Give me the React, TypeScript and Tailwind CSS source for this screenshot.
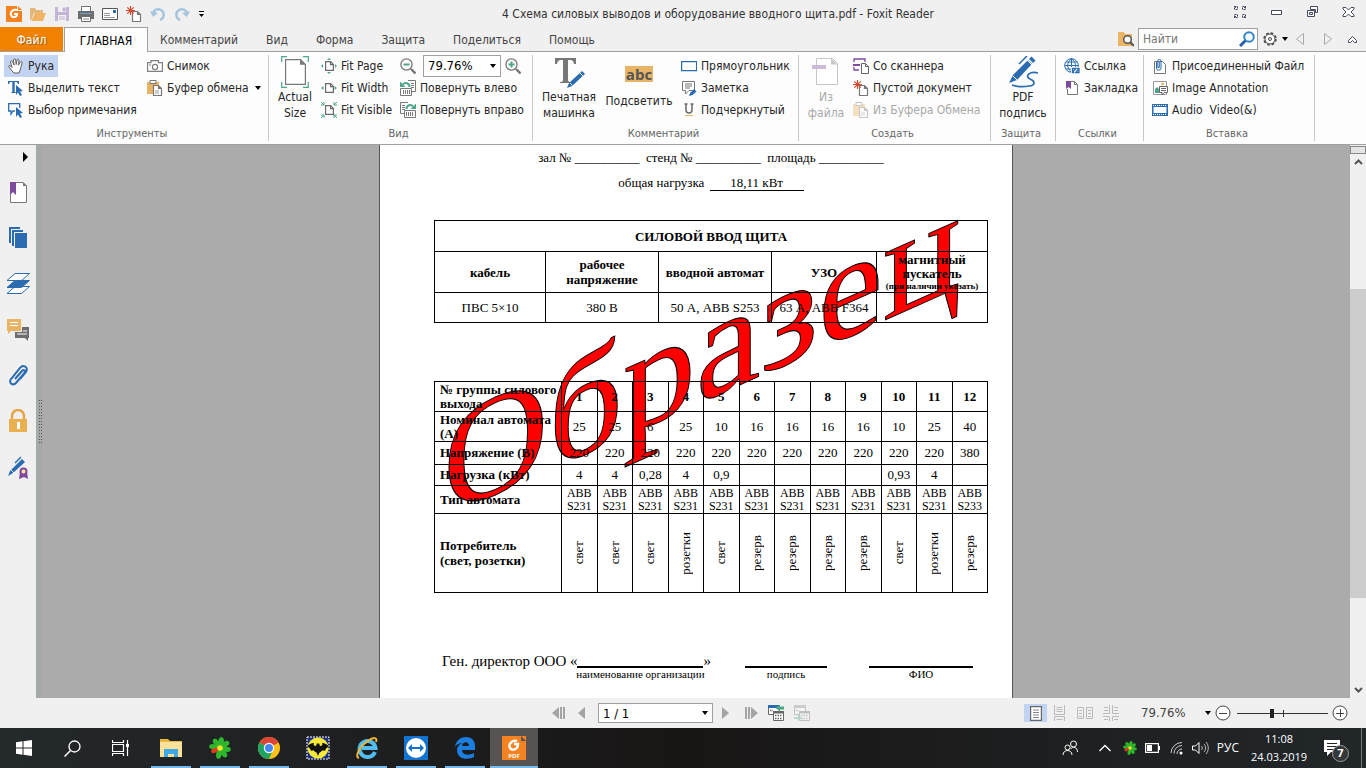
import type { ReactNode } from "react";

/* ---------- icon helpers ---------- */

function Ico({ w = 16, h = 16, children }: { w?: number; h?: number; children: ReactNode }) {
  return (
    <svg width={w} height={h} viewBox={`0 0 ${w} ${h}`} fill="none" className="shrink-0" aria-hidden="true">
      {children}
    </svg>
  );
}

const Caret = () => (
  <Ico w={6} h={4}>
    <path d="M0 0h6L3 4z" fill="#000" />
  </Ico>
);

const PageShape = ({ color = "#777" }: { color?: string }) => (
  <path d="M6.5 5.5h5l3 3v7h-8zM11.5 5.5v3h3" fill="#fff" stroke={color} strokeWidth="1.2" />
);

const FoxitIcon = () => (
  <Ico>
    <path d="M0 0h11v5h5v11H0z" fill="#f58220" />
    <path d="M12 0l4 4h-4z" fill="#f58220" />
    <path d="M11 4C7 3 4 6 5 9c1 3 6 3 6-1H8" stroke="#fff" strokeWidth="2" />
  </Ico>
);

const OpenIcon = () => (
  <Ico>
    <path d="M0 2h5l1 2h7v3H4l-3 7H0z" fill="#e3b679" />
    <path d="M5 7h11l-3 8H1z" fill="#efb562" />
  </Ico>
);

const SaveIcon = () => (
  <Ico>
    <path d="M1 1h14v14H1z" fill="#c4b4d6" />
    <path d="M4 1h8v5H4zM4 9h8v6H4z" fill="#f0f0f0" />
    <path d="M9 2h2v3H9zM5 11h6M5 13h6" fill="#c4b4d6" stroke="#c4b4d6" />
  </Ico>
);

const PrintIcon = () => (
  <Ico>
    <path d="M3.5 5V.5h9V5" fill="#fff" stroke="#6d6d6d" />
    <path d="M0 5h16v8H0z" fill="#6d6d6d" />
    <path d="M2 7h12v1H2z" fill="#6fa0cf" />
    <path d="M3.5 10.5h9v5h-9z" fill="#fff" stroke="#6d6d6d" />
    <path d="M5 13h6" stroke="#8a8a8a" />
  </Ico>
);

const MailIcon = () => (
  <Ico>
    <path d="M.5 2.5h15v11H.5z" fill="#fff" stroke="#555" />
    <path d="M2 7.5h6M2 9.5h6M2 11.5h11" stroke="#999" />
    <path d="M11 4h3v3h-3z" fill="#2b6cb0" />
  </Ico>
);

const NewDocIcon = () => (
  <Ico>
    <PageShape />
    <path d="M4.5 0v9M0 4.5h9M1.3 1.3l6.4 6.4M7.7 1.3L1.3 7.7" stroke="#d1492f" strokeWidth="1.2" />
  </Ico>
);

const UndoIcon = () => (
  <Ico>
    <path d="M3 7a5.5 5.5 0 1 1 7 7" stroke="#a6c4dc" strokeWidth="2.4" />
    <path d="M0 5l3 6 5-4z" fill="#a6c4dc" />
  </Ico>
);

const RedoIcon = () => (
  <Ico>
    <path d="M13 7a5.5 5.5 0 1 0-7 7" stroke="#a6c4dc" strokeWidth="2.4" />
    <path d="M16 5l-3 6-5-4z" fill="#a6c4dc" />
  </Ico>
);

const HandIcon = () => (
  <Ico>
    <path
      d="M5 14L1 9C0 7.500 1.500 7 2.500 8L4 9.500 2.500 4C2.300 2.500 4 2.200 4.500 3.500L6 7 5.500 2C5.500.500 7.500.500 7.700 2L8.200 6.500 9 2C9.300.700 11 1 10.900 2.500L10.500 7.200 12.300 4C13 2.900 14.500 3.500 14 5L12.500 11 11 15H6z"
      fill="#fff"
      stroke="#5f5f5f"
    />
  </Ico>
);

const Pointer = () => <path d="M8 5l7 6-3 .5 2 3.500-2 1-2-3.500L8 15z" fill="#2b6cb0" />;

const SelectTextIcon = () => (
  <Ico>
    <path d="M0 1h11v3h-1L9 2H6.700v10l1.300.500V13H3v-.5l1.300-.5V2H2L1 4H0z" fill="#2b6cb0" />
    <Pointer />
  </Ico>
);

const SelectNoteIcon = () => (
  <Ico>
    <path d="M7 9H5l-2 3V9H.7V1.700h11V6" stroke="#2b6cb0" strokeWidth="1.3" />
    <Pointer />
  </Ico>
);

const CameraIcon = () => (
  <Ico>
    <path d="M.6 4.600h3.400V2.600h7.500v2h3.900v8.800H.6z" fill="#fff" stroke="#808080" strokeWidth="1.2" />
    <circle cx="8" cy="9" r="2.600" stroke="#808080" strokeWidth="1.2" />
    <path d="M2 7h2" stroke="#808080" />
  </Ico>
);

const ClipboardIcon = ({ faded = false }: { faded?: boolean }) => (
  <Ico>
    <g opacity={faded ? 0.4 : 1}>
      <path d="M0 2h12v12H0z" fill="#e9b465" />
      <path d="M3 .5h6v3H3z" fill="#fff" stroke="#777" />
      <PageShape />
      <path d="M8 11h4M8 13h4" stroke="#999" />
    </g>
  </Ico>
);

const ActualSizeIcon = () => (
  <Ico w={28} h={32}>
    <path d="M.7 6V.7H6M22 .700h5.300V6M27.300 26v5.300H22M6 31.300H.7V26" stroke="#4ea68a" strokeWidth="1.2" />
    <path d="M4.600 3.600h15l4.800 4.800v20H4.600z" fill="#fff" stroke="#777" strokeWidth="1.2" />
    <path d="M19 3.500v5.300h5.400z" fill="#777" />
  </Ico>
);

const FitDoc = () => (
  <path d="M4.600 3.600h5l2.800 2.800v6H4.600zM9.500 3.600v3h3" fill="#fff" stroke="#6a6a6a" strokeWidth="1.2" />
);

const FitPageIcon = () => (
  <Ico>
    <FitDoc />
    <path d="M8 0l2 2H6zM8 16l2-2H6zM0 8l2-2v4zM16 8l-2-2v4z" fill="#4ea68a" />
  </Ico>
);

const FitWidthIcon = () => (
  <Ico>
    <FitDoc />
    <path d="M0 8l2.500-2v4zM16 8l-2.500-2v4z" fill="#4ea68a" />
  </Ico>
);

const FitVisibleIcon = () => (
  <Ico>
    <FitDoc />
    <path d="M0 0l3 3M3 0v3H0M16 0l-3 3M13 0v3h3M0 16l3-3M3 16v-3H0M16 16l-3-3M13 16v-3h3" stroke="#4ea68a" />
  </Ico>
);

const ZoomIcon = ({ plus = false }: { plus?: boolean }) => (
  <Ico>
    <circle cx="6.500" cy="6.500" r="5.600" fill="#fff" stroke="#777" strokeWidth="1.3" />
    <path d="M11 11l4.500 4.500" stroke="#777" strokeWidth="2.400" />
    <path d={plus ? "M3.500 6.500h6M6.500 3.500v6" : "M3.500 6.500h6"} stroke="#4ea68a" strokeWidth="2" />
  </Ico>
);

const RotateIcon = ({ right = false }: { right?: boolean }) => (
  <Ico>
    <g transform={right ? "matrix(-1 0 0 1 16 0)" : undefined}>
      <path d="M8 .5h7.500v11H12" stroke="#777" />
      <path d="M11 3.500h3M11 5.500h3M11 7.500h3" stroke="#777" />
      <path d="M.5 8.500h11v7H.5z" fill="#fff" stroke="#777" />
      <path d="M3.500 10v4M5.500 10v4M7.500 10v4M9.500 10v4" stroke="#777" />
      <path d="M9.500 7C9.500 3 5 2 3 4.500" stroke="#4ea68a" strokeWidth="2" />
      <path d="M0 1.500v5.500h5.500z" fill="#4ea68a" />
    </g>
  </Ico>
);

const TypewriterIcon = () => (
  <Ico w={32} h={32}>
    <path d="M2 2h21v6h-2c-.500-3-1.500-4-4-4h-2v20c0 1.500 1 2 3 2v1H7v-1c2 0 3-.5 3-2V4H8C5.500 4 4.500 5 4 8H2z" fill="#777" />
    <path d="M14 32l2-5 13-12 3 3-13 12z" fill="#2b6cb0" />
    <path d="M17 27l2.500 2.500M27 17l3 3" stroke="#fff" />
  </Ico>
);

const RectIcon = () => (
  <Ico>
    <path d="M.6 3.600h15v9H.6z" fill="#fff" stroke="#2b6cb0" strokeWidth="1.3" />
  </Ico>
);

const NoteIcon = () => (
  <Ico>
    <path d="M1.500 1.500h12v9H8L4.500 14v-3.500h-3z" fill="#fff" stroke="#777" />
    <path d="M4 4h7M4 6h7M4 8h5" stroke="#777" />
    <path d="M8 16l1-3 4-4 2.500 2.500-4 3.500z" fill="#2b6cb0" />
  </Ico>
);

const UnderlineIcon = () => (
  <Ico>
    <path d="M5 2v6a3 3 0 0 0 6 0V2M3.500 2h3M9.500 2h3" stroke="#6a6a6a" strokeWidth="1.500" />
    <path d="M4 13.500h8" stroke="#e9b465" />
  </Ico>
);

const FromFileIcon = () => (
  <Ico w={28} h={32}>
    <path d="M4.500 2.500h16l5 5v21h-21z" fill="#fff" stroke="#c6c6c6" />
    <path d="M19 2.500v6h6.500z" fill="#c6c6c6" />
    <path d="M0 9h14v4H0z" fill="#cdb9d8" />
  </Ico>
);

const ScannerIcon = () => (
  <Ico>
    <path d="M1 4V1h11v3M1 9v3h5" stroke="#7d4a9c" strokeWidth="1.3" />
    <path d="M0 6h7v2H0z" fill="#7d4a9c" />
    <path d="M8.500 5.500h4l3 3v7h-7zM12.500 5.500v3h3" fill="#fff" stroke="#666" />
  </Ico>
);

const PdfSignIcon = () => (
  <Ico w={32} h={32}>
    <path d="M2 27L6 19l15-15 4 4-15 16z" fill="#2b6cb0" />
    <path d="M22 3l2.500-2.500 4 4L26 7z" fill="#2b6cb0" />
    <path d="M12 8l8-8" stroke="#2b6cb0" strokeWidth="1.500" />
    <path d="M6 20l4 4M20 4l5 5" stroke="#fff" />
    <path d="M31 17c-8-2-14 3-8 6 5 2 6 6-1 7-5 1-11 1-17-1" stroke="#2b6cb0" strokeWidth="1.700" />
  </Ico>
);

const LinkIcon = () => (
  <Ico>
    <circle cx="7.500" cy="7.500" r="6.800" stroke="#2b6cb0" />
    <path d="M7.500.700v13.600M.7 7.500h13.600M2 4h11M2 11h7M7.500.700c-5 4-5 9.600 0 13.600M7.500.700c5 4 5 8 2 12" stroke="#2b6cb0" />
    <path d="M7 9h9v7H7z" fill="#fff" />
    <path d="M10 14.500H8.500v-4H12l-3 3M13 10.500h2v4h-3.500l3-3" stroke="#2b6cb0" strokeWidth="1.300" />
  </Ico>
);

const BookmarkIcon = () => (
  <Ico>
    <path d="M5 1.500h5.500l3 3v10h-10V9M10.500 1.500v3h3" fill="#fff" stroke="#777" />
    <path d="M2 1h5v8L4.500 7 2 9z" fill="#7d4a9c" />
  </Ico>
);

const AttachIcon = () => (
  <Ico>
    <path d="M2.500 3.500h8l3 3v9h-11z" fill="#fff" stroke="#777" />
    <path d="M4.500 4v6a2 2 0 0 0 4.500 0V3a1.600 1.600 0 0 0-3.200 0v6.500h1.500V4" stroke="#2b6cb0" />
  </Ico>
);

const ImageIcon = () => (
  <Ico>
    <path d="M1.500 1.500h13v13h-13z" fill="#fff" stroke="#999" />
    <path d="M3 12V9l2-2 3 3v3H3z" fill="#4ea68a" />
    <circle cx="10.500" cy="4" r="1.400" fill="#e9b465" />
    <path d="M7.500 6.500h8v6H12l-2 2.500v-2.500H7.500z" fill="#fff" stroke="#666" />
    <path d="M9 8.500h5M9 10.500h5" stroke="#666" />
  </Ico>
);

const FilmIcon = () => (
  <Ico>
    <path d="M0 2h16v12H0z" fill="#2b6cb0" />
    <path d="M1.500 5h13v6h-13z" fill="#fff" />
    <path d="M1 3.500h14M1 12.500h14" stroke="#fff" strokeDasharray="1 1" />
  </Ico>
);

/* ---------- ribbon parts ---------- */

type ToolProps = { icon: ReactNode; label: string; active?: boolean; disabled?: boolean; menu?: boolean };

function Tool({ icon, label, active, disabled, menu }: ToolProps) {
  return (
    <button
      type="button"
      disabled={disabled}
      className={`flex h-[22px] items-center gap-1 self-start px-1 whitespace-pre ${active ? "bg-[#c3d4f2]" : ""} ${
        disabled ? "text-[#a8a8a8]" : ""
      }`}
    >
      {icon}
      <span>{label}</span>
      {menu && (
        <span className="ml-0.5">
          <Caret />
        </span>
      )}
    </button>
  );
}

function BigTool({ icon, lines, disabled }: { icon: ReactNode; lines: string[]; disabled?: boolean }) {
  return (
    <button
      type="button"
      disabled={disabled}
      className={`flex shrink-0 flex-col items-center leading-4 ${disabled ? "text-[#a8a8a8]" : ""}`}
    >
      <span className="flex h-[38px] items-center">{icon}</span>
      {lines.map((line) => (
        <span key={line}>{line}</span>
      ))}
    </button>
  );
}

function Group({ title, className, children }: { title: string; className: string; children: ReactNode }) {
  return (
    <section aria-label={title} className={`my-[3px] flex shrink-0 flex-col border-r border-[#c8c8c8] ${className}`}>
      <div className="flex h-[66px] pl-1">{children}</div>
      <div className="mt-auto pr-1 text-center text-[11px] leading-[14px] text-[#666]">{title}</div>
    </section>
  );
}

function TitleBar() {
  const quick = [
    ["Foxit", <FoxitIcon />],
    ["Открыть", <OpenIcon />],
    ["Сохранить", <SaveIcon />],
    ["Печать", <PrintIcon />],
    ["Почта", <MailIcon />],
    ["Создать", <NewDocIcon />],
    ["Отменить", <UndoIcon />],
    ["Повторить", <RedoIcon />],
  ] as [string, ReactNode][];
  return (
    <header className="flex h-[27px] shrink-0 items-center">
      <div className="flex w-[210px] shrink-0 items-center gap-2 pl-[6px]">
        {quick.map(([name, icon]) => (
          <button key={name} type="button" aria-label={name}>
            {icon}
          </button>
        ))}
        <button type="button" aria-label="Настроить панель">
          <Ico w={7} h={8}>
            <path d="M1 1.500h5" stroke="#000" />
            <path d="M1 4h5L3.500 7z" fill="#000" />
          </Ico>
        </button>
      </div>
      <h1 className="min-w-0 flex-1 truncate text-center text-[#333]">
        4 Схема силовых выводов и оборудование вводного щита.pdf - Foxit Reader
      </h1>
      <div className="flex w-[140px] shrink-0 items-center gap-5 pb-1 pl-[6px] text-[#454a60]">
        <button type="button" aria-label="Полный экран">
          <Ico>
            <path
              d="M2.500 2.500h3v3h-3zM10.500 2.500h3v3h-3zM2.500 10.500h3v3h-3zM10.500 10.500h3v3h-3z"
              stroke="currentColor"
              strokeDasharray="2 1"
            />
            <path d="M2 2l2 2M14 2l-2 2M2 14l2-2M14 14l-2-2" stroke="currentColor" />
          </Ico>
        </button>
        <button type="button" aria-label="Свернуть">
          <Ico>
            <path d="M3.500 6.500h10v4h-10z" stroke="currentColor" fill="#fff" />
          </Ico>
        </button>
        <button type="button" aria-label="Восстановить">
          <Ico>
            <path d="M6.500 2.500h7v6h-2v-3h-5z" stroke="currentColor" fill="#fff" />
            <path d="M3.500 6.500h7v6h-7zM5.500 8.500h3v2h-3z" stroke="currentColor" fill="#fff" />
          </Ico>
        </button>
        <button type="button" aria-label="Закрыть">
          <Ico>
            <path
              d="M3 3.500h3l2.500 2.500 2.500-2.500h3v1.500L11 8l3 3v1.500h-3L8.500 10 6 12.500H3V11l3-3-3-3z"
              stroke="currentColor"
              fill="#fff"
            />
          </Ico>
        </button>
      </div>
    </header>
  );
}

function TabBar() {
  const tabs = ["Комментарий", "Вид", "Форма", "Защита", "Поделиться", "Помощь"];
  return (
    <nav className="flex h-[25px] shrink-0 items-stretch border-b border-[#a0a0a0]">
      <button type="button" className="w-[63px] bg-[#f08200] pt-0.5 text-white [text-shadow:1px_1px_0_#a06020]">
        Файл
      </button>
      <button
        type="button"
        className="z-10 -mb-px ml-px w-[84px] border border-b-0 border-[#a0a0a0] bg-[#fdfdfd] pt-0.5 text-black"
      >
        ГЛАВНАЯ
      </button>
      <div className="-ml-0.5 flex items-center pt-0.5">
        {tabs.map((tab) => (
          <button key={tab} type="button" className="px-[14px] text-[#444]">
            {tab}
          </button>
        ))}
      </div>
      <div className="ml-auto flex items-center gap-1 pr-1.5">
        <Ico>
          <path d="M0 1h6l1 2h7v12H0z" fill="#e9b465" />
          <circle cx="9.500" cy="8.500" r="3.800" fill="#fff" stroke="#555" strokeWidth="1.500" />
          <path d="M12 11l4 4" stroke="#555" strokeWidth="2" />
        </Ico>
        <label className="flex h-[22px] w-[120px] items-center border border-[#a0a0a0] bg-white pr-0.5">
          <input
            type="text"
            aria-label="Найти"
            placeholder="Найти"
            className="w-full min-w-0 flex-1 px-1 outline-none placeholder:text-[#777]"
          />
          <Ico>
            <path d="M7 9l-6 6" stroke="#2860a8" strokeWidth="3" />
            <circle cx="10" cy="6" r="4.800" fill="#f4faff" stroke="#3484cc" strokeWidth="2" />
          </Ico>
        </label>
        <button type="button" aria-label="Настройки" className="flex items-center gap-1">
          <Ico>
            <circle cx="8" cy="8" r="6" stroke="#444" strokeWidth="1.500" strokeDasharray="2.700 2" />
            <circle cx="8" cy="8" r="5" stroke="#444" fill="#fff" />
            <circle cx="8" cy="8" r="1.500" stroke="#444" />
          </Ico>
          <Caret />
        </button>
        <button type="button" aria-label="Назад">
          <Ico>
            <path d="M11.500 2.500v11L4.500 8z" stroke="#aaa" />
          </Ico>
        </button>
        <button type="button" aria-label="Вперед" className="ml-2">
          <Ico>
            <path d="M4.500 2.500v11l7-5.500z" stroke="#aaa" />
          </Ico>
        </button>
        <button type="button" aria-label="Свернуть ленту" className="ml-1">
          <Ico>
            <path d="M4.500 9.500L8.500 5.500l4 4v2h-2l-2-2-2 2h-2z" stroke="#444a5a" fill="#fff" />
          </Ico>
        </button>
      </div>
    </nav>
  );
}

function Ribbon() {
  return (
    <div className="flex h-[93px] shrink-0 overflow-hidden border-b border-[#a0a0a0] bg-[#fdfdfd] text-[#262626]">
      <Group title="Инструменты" className="w-[269px]">
        <div className="flex w-[139px] flex-col">
          <Tool icon={<HandIcon />} label="Рука" active />
          <Tool icon={<SelectTextIcon />} label="Выделить текст" />
          <Tool icon={<SelectNoteIcon />} label="Выбор примечания" />
        </div>
        <div className="flex flex-col">
          <Tool icon={<CameraIcon />} label="Снимок" />
          <Tool icon={<ClipboardIcon />} label="Буфер обмена" menu />
        </div>
      </Group>

      <Group title="Вид" className="w-[264px]">
        <div className="flex w-11 justify-center">
          <BigTool icon={<ActualSizeIcon />} lines={["Actual", "Size"]} />
        </div>
        <div className="flex w-[79px] flex-col">
          <Tool icon={<FitPageIcon />} label="Fit Page" />
          <Tool icon={<FitWidthIcon />} label="Fit Width" />
          <Tool icon={<FitVisibleIcon />} label="Fit Visible" />
        </div>
        <div className="flex flex-col">
          <div className="flex h-[22px] items-center gap-1 pl-1">
            <button type="button" aria-label="Уменьшить">
              <ZoomIcon />
            </button>
            <div className="relative ml-[3px] flex h-[22px] w-[78px] items-center border border-[#a0a0a0] bg-white">
              <select aria-label="Масштаб" className="h-full w-full appearance-none pl-1 text-[13px] text-black">
                <option>79.76%</option>
              </select>
              <span className="pointer-events-none absolute right-1">
                <Caret />
              </span>
            </div>
            <button type="button" aria-label="Увеличить">
              <ZoomIcon plus />
            </button>
          </div>
          <Tool icon={<RotateIcon />} label="Повернуть влево" />
          <Tool icon={<RotateIcon right />} label="Повернуть вправо" />
        </div>
      </Group>

      <Group title="Комментарий" className="w-[266px]">
        <div className="flex w-16 justify-center">
          <BigTool icon={<TypewriterIcon />} lines={["Печатная", "машинка"]} />
        </div>
        <div className="flex w-[76px] items-start justify-center">
          <BigTool
            icon={
              <span className="bg-[#e9b465] px-px font-['Open_Sans'] text-[15px] leading-4 font-bold text-[#555]">
                abc
              </span>
            }
            lines={["Подсветить"]}
          />
        </div>
        <div className="flex flex-col">
          <Tool icon={<RectIcon />} label="Прямоугольник" />
          <Tool icon={<NoteIcon />} label="Заметка" />
          <Tool icon={<UnderlineIcon />} label="Подчеркнутый" />
        </div>
      </Group>

      <Group title="Создать" className="w-[192px]">
        <div className="flex w-[46px] justify-center">
          <BigTool icon={<FromFileIcon />} lines={["Из", "файла"]} disabled />
        </div>
        <div className="flex flex-col">
          <Tool icon={<ScannerIcon />} label="Со сканнера" />
          <Tool icon={<NewDocIcon />} label="Пустой документ" />
          <Tool icon={<ClipboardIcon faded />} label="Из Буфера Обмена" disabled />
        </div>
      </Group>

      <Group title="Защита" className="w-[65px]">
        <div className="flex w-full justify-center pr-1">
          <BigTool icon={<PdfSignIcon />} lines={["PDF", "подпись"]} />
        </div>
      </Group>

      <Group title="Ссылки" className="w-[88px]">
        <div className="flex flex-col">
          <Tool icon={<LinkIcon />} label="Ссылка" />
          <Tool icon={<BookmarkIcon />} label="Закладка" />
        </div>
      </Group>

      <Group title="Вставка" className="w-[171px]">
        <div className="flex flex-col">
          <Tool icon={<AttachIcon />} label="Присоединенный Файл" />
          <Tool icon={<ImageIcon />} label="Image Annotation" />
          <Tool icon={<FilmIcon />} label="Audio  Video(&)" />
        </div>
      </Group>
    </div>
  );
}

/* ---------- side panel ---------- */

function SidePanel() {
  const items = [
    [
      "Закладки",
      <g>
        <path d="M5 3.500h12l3.500 3.500v16.500h-16V8" fill="#fff" stroke="#777" />
        <path d="M17 3v4h4z" fill="#777" />
        <path d="M4 3h6v13l-3-3-3 3z" fill="#7d4a9c" />
      </g>,
    ],
    [
      "Страницы",
      <g fill="#2b6cb0">
        <path d="M3 2h11v2H5v14H3z" />
        <path d="M6 5h11v2H8v14H6z" />
        <path d="M9 8h12v15H9z" />
      </g>,
    ],
    [
      "Слои",
      <g stroke="#2b6cb0">
        <path d="M9 15.500h14.500l-8 7H1z" fill="#fff" />
        <path d="M9 9.500h14.500l-8 7H1z" fill="#2b6cb0" />
        <path d="M9 2.500h14.500l-8 7H1z" fill="#fff" />
      </g>,
    ],
    [
      "Комментарии",
      <g>
        <path d="M1 2h14v12H5l-3 3v-3H1z" fill="#e9b465" />
        <path d="M4 5.500h8M4 8.500h8" stroke="#fff" />
        <path d="M16 10h7v11h-1v3l-3-3H9v-6h7z" fill="#6d6d6d" />
        <path d="M11 17h10M17 14h4" stroke="#fff" />
      </g>,
    ],
    [
      "Вложения",
      <path
        d="M9 16l7-8c2-2 4 0 2.500 2l-8.500 10c-3 3-8 0-5-4L14 5c3-4 9-1 6 4l-6 7"
        stroke="#2b6cb0"
        strokeWidth="2"
      />,
    ],
    [
      "Безопасность",
      <g>
        <path d="M6 11V7a6 6 0 0 1 12 0v4" stroke="#e2a646" strokeWidth="2.500" />
        <path d="M3 10h18v13H3z" fill="#e9b04f" />
        <path d="M11 13h3v7h-3z" fill="#fff" />
      </g>,
    ],
    [
      "Подписи",
      <g>
        <path d="M2 21l2-5L16 4l3 3L7 18z" fill="#2b6cb0" />
        <path d="M9 8l6-6" stroke="#2b6cb0" strokeWidth="1.500" />
        <path d="M5 15l4 4" stroke="#f0f0f0" />
        <path d="M14 17h7l1 7-4-2-5 2z" fill="#7d4a9c" />
        <circle cx="17.500" cy="16.500" r="3" fill="#ffe9a0" stroke="#7d4a9c" strokeWidth="2" />
      </g>,
    ],
  ] as [string, ReactNode][];
  return (
    <aside className="flex w-9 shrink-0 flex-col bg-[#f0f0f0]">
      <button type="button" aria-label="Развернуть" className="flex h-6 items-center justify-end pr-2">
        <Ico w={5} h={10}>
          <path d="M0 0v10l5-5z" fill="#000" />
        </Ico>
      </button>
      {items.map(([name, art]) => (
        <button key={name} type="button" aria-label={name} className="flex h-[46px] items-center justify-center">
          <Ico w={25} h={26}>
            {art}
          </Ico>
        </button>
      ))}
    </aside>
  );
}

/* ---------- document ---------- */

const groups = [
  { amp: "25", volt: "220", load: "4", type: "S231", use: "свет" },
  { amp: "25", volt: "220", load: "4", type: "S231", use: "свет" },
  { amp: "6", volt: "220", load: "0,28", type: "S231", use: "свет" },
  { amp: "25", volt: "220", load: "4", type: "S231", use: "розетки" },
  { amp: "10", volt: "220", load: "0,9", type: "S231", use: "свет" },
  { amp: "16", volt: "220", load: "", type: "S231", use: "резерв" },
  { amp: "16", volt: "220", load: "", type: "S231", use: "резерв" },
  { amp: "16", volt: "220", load: "", type: "S231", use: "резерв" },
  { amp: "16", volt: "220", load: "", type: "S231", use: "резерв" },
  { amp: "10", volt: "220", load: "0,93", type: "S231", use: "свет" },
  { amp: "25", volt: "220", load: "4", type: "S231", use: "розетки" },
  { amp: "40", volt: "380", load: "", type: "S233", use: "резерв" },
];

const cell = "border border-black p-0 text-center";
const rowHead = "border border-black py-0 pr-0 pl-[5px] text-left font-bold whitespace-nowrap";

function InputTable() {
  return (
    <table className="relative mt-[25px] w-full table-fixed border-collapse leading-[15px]">
      <colgroup>
        <col className="w-[111px]" />
        <col className="w-[113px]" />
        <col className="w-[113px]" />
        <col className="w-[105px]" />
        <col />
      </colgroup>
      <thead>
        <tr className="h-[31px]">
          <th colSpan={5} className={cell}>
            СИЛОВОЙ ВВОД ЩИТА
          </th>
        </tr>
        <tr className="h-[41px]">
          <th className={cell}>кабель</th>
          <th className={cell}>
            рабочее
            <br />
            напряжение
          </th>
          <th className={cell}>вводной автомат</th>
          <th className={cell}>УЗО</th>
          <th className={cell}>
            <div className="leading-[14px]">
              магнитный
              <br />
              пускатель
            </div>
            <div className="text-[9px] leading-[11px]">(при наличии указать)</div>
          </th>
        </tr>
      </thead>
      <tbody>
        <tr className="h-[30px]">
          <td className={cell}>ПВС 5×10</td>
          <td className={cell}>380 В</td>
          <td className={cell}>50 А, ABB S253</td>
          <td className={cell}>63 А, ABB F364</td>
          <td className={cell}></td>
        </tr>
      </tbody>
    </table>
  );
}

function GroupTable() {
  return (
    <table className="relative mt-[58px] w-full table-fixed border-collapse leading-[14px]">
      <colgroup>
        <col className="w-[127px]" />
        <col span={12} />
      </colgroup>
      <tbody>
        <tr className="h-[30px]">
          <th className={rowHead}>
            № группы силового
            <br />
            выхода
          </th>
          {groups.map((_, i) => (
            <th key={i} className={cell}>
              {i + 1}
            </th>
          ))}
        </tr>
        <tr className="h-[30px]">
          <th className={rowHead}>
            Номинал автомата
            <br />
            (А)
          </th>
          {groups.map((g, i) => (
            <td key={i} className={cell}>
              {g.amp}
            </td>
          ))}
        </tr>
        <tr className="h-[23px]">
          <th className={rowHead}>Напряжение (В)</th>
          {groups.map((g, i) => (
            <td key={i} className={cell}>
              {g.volt}
            </td>
          ))}
        </tr>
        <tr className="h-[21px]">
          <th className={rowHead}>Нагрузка (кВт)</th>
          {groups.map((g, i) => (
            <td key={i} className={cell}>
              {g.load}
            </td>
          ))}
        </tr>
        <tr className="h-[28px]">
          <th className={rowHead}>Тип автомата</th>
          {groups.map((g, i) => (
            <td key={i} className={`${cell} text-xs leading-[13px]`}>
              ABB
              <br />
              {g.type}
            </td>
          ))}
        </tr>
        <tr className="h-[79px]">
          <th className={`${rowHead} leading-[15px]`}>
            Потребитель
            <br />
            (свет, розетки)
          </th>
          {groups.map((g, i) => (
            <td key={i} className={cell}>
              <span className="inline-block rotate-180 align-middle [writing-mode:vertical-rl]">{g.use}</span>
            </td>
          ))}
        </tr>
      </tbody>
    </table>
  );
}

function Signature({ caption, className }: { caption: string; className: string }) {
  return (
    <div className={`flex flex-col items-center ${className}`}>
      <div className="h-4 w-full border-b-2 border-black" />
      <div className="text-[11px] leading-[13px] whitespace-nowrap">{caption}</div>
    </div>
  );
}

function DocumentPage() {
  return (
    <article className="relative w-[634px] shrink-0 border-x border-[#555] bg-white pr-6 pl-[54px] font-['Liberation_Serif',serif] text-[13px] text-black">
      {/* slanted specimen mark, printed under the tables */}
      <svg className="absolute inset-0 h-full w-full" aria-hidden="true">
        <text x="63" y="400" transform="skewY(-24)" fontSize="146" fill="#f00" stroke="#000" strokeWidth="1">
          Образец
        </text>
      </svg>

      <div className="relative text-center leading-[25px] whitespace-pre">
        <p>зал № __________  стенд № __________  площадь __________</p>
        <p>
          общая нагрузка{" "}
          <span className="ml-0.5 inline-block w-[94px] border-b border-black leading-[14px]">18,11 кВт</span>
        </p>
      </div>

      <InputTable />
      <GroupTable />

      <div className="relative mt-[59px] flex items-start pl-2">
        <div className="text-[15px] leading-[18px] whitespace-nowrap">Ген. директор ООО «</div>
        <Signature className="w-[126px]" caption="наименование организации" />
        <div className="text-[15px] leading-[18px]">»</div>
        <Signature className="ml-[34px] w-[82px]" caption="подпись" />
        <Signature className="ml-[42px] w-[104px]" caption="ФИО" />
      </div>
    </article>
  );
}

function Viewer() {
  return (
    <main className="flex min-h-0 flex-1 overflow-hidden bg-[#ababab]">
      <SidePanel />
      <div className="flex w-1.5 shrink-0 items-center justify-end bg-[#a6a9a9]">
        <Ico w={3} h={44}>
          <path d="M.5 0v44M2.500 0v44" stroke="#555" strokeDasharray="1 2" />
        </Ico>
      </div>
      <div className="flex min-w-0 flex-1 justify-center overflow-hidden">
        <DocumentPage />
      </div>
      <div className="flex w-4 shrink-0 flex-col items-center bg-[#f0f0f0] pt-[1px]">
        <div className="h-2 w-full border border-[#888] bg-[#e4e4e4]" />
        <button type="button" aria-label="Вверх" className="flex h-4 items-center">
          <Ico w={9} h={6}>
            <path d="M1 5l3.500-3.500L8 5" stroke="#555" strokeWidth="2" />
          </Ico>
        </button>
        <div className="min-h-0 flex-[119]" />
        <div className="min-h-0 w-full flex-[309] bg-[#cdcdcd]" />
        <div className="min-h-0 flex-[84]" />
        <button type="button" aria-label="Вниз" className="flex h-4 items-center">
          <Ico w={9} h={6}>
            <path d="M1 1l3.500 3.500L8 1" stroke="#555" strokeWidth="2" />
          </Ico>
        </button>
      </div>
    </main>
  );
}

function StatusBar() {
  return (
    <footer className="grid h-[30px] shrink-0 grid-cols-[1fr_auto_1fr] items-center bg-[#f0f0f0]">
      <div />
      <div className="flex items-center pr-1">
        <button type="button" aria-label="Первая страница">
          <Ico w={14} h={12}>
            <path d="M7 0v12L0 6zM8 0h2v12H8zM11 0h2v12h-2z" fill="#a4a4a4" />
          </Ico>
        </button>
        <button type="button" aria-label="Предыдущая страница" className="ml-3">
          <Ico w={8} h={12}>
            <path d="M7 0v12L0 6z" fill="#a4a4a4" />
          </Ico>
        </button>
        <div className="relative ml-3 flex h-5 w-[115px] items-center border border-[#a0a0a0] bg-white">
          <select aria-label="Страница" className="h-full w-full appearance-none pl-1 text-[13px] text-black">
            <option>1 / 1</option>
          </select>
          <span className="pointer-events-none absolute right-1">
            <Caret />
          </span>
        </div>
        <button type="button" aria-label="Следующая страница" className="ml-2">
          <Ico w={8} h={12}>
            <path d="M1 0v12l7-6z" fill="#a4a4a4" />
          </Ico>
        </button>
        <button type="button" aria-label="Последняя страница" className="ml-[15px]">
          <Ico w={14} h={12}>
            <path d="M7 0v12l7-6zM1 0h2v12H1zM4 0h2v12H4z" fill="#a4a4a4" />
          </Ico>
        </button>
        {[1, 0.35].map((opacity, i) => (
          <button
            key={i}
            type="button"
            aria-label={i ? "Следующий вид" : "Предыдущий вид"}
            className="ml-[10px]"
            style={{ opacity }}
          >
            <Ico>
              <path d="M.5.500h11v9H.5z" fill="#fff" stroke="#666" />
              <path d="M0 0h12v3H0z" fill={i ? "#888" : "#2b6cb0"} />
              <path d="M5.500 6.500h10v9h-10z" fill="#fff" stroke="#666" />
              <path d="M5 6h11v2.500H5z" fill="#666" />
              <path d="M7 10.500h7M7 13.500h7M2 5.500h3" stroke="#666" strokeWidth="1.500" strokeDasharray="1.500 1" />
              <path d={i ? "M0 12h4v-2.500L8 13l-4 3v-2H0z" : "M16 1.500h-4V-.5L7.500 3l4.500 3.500v-2h4z"} fill="#4ea68a" />
            </Ico>
          </button>
        ))}
      </div>
      <div className="flex items-center justify-end pr-[18px]">
        <button
          type="button"
          aria-label="Одна страница"
          className="flex h-[18px] w-[23px] items-center justify-center bg-[#c3d4f2]"
        >
          <Ico w={12} h={15}>
            <path d="M.6.600h10.800v13.800H.6z" fill="#fff" stroke="#666" strokeWidth="1.200" />
            <path d="M3 4h6M3 6.500h6M3 9h6M3 11.500h6" stroke="#888" />
          </Ico>
        </button>
        <button type="button" aria-label="Непрерывно" className="ml-[6px]">
          <Ico w={13}>
            <path
              d="M1.500 0v9.500h10V0M1.500 16v-4.500h10V16M3.500 2.500h6M3.500 4.500h6M3.500 6.500h6M3.500 14.500h6"
              stroke="#bbb"
            />
          </Ico>
        </button>
        <button type="button" aria-label="Разворот" className="ml-[11px]">
          <Ico>
            <path
              d="M.5 2.500h6v11h-6zM9.500 2.500h6v11h-6zM2 5.500h3M2 8.500h3M2 11.500h3M11 5.500h3M11 8.500h3M11 11.500h3"
              stroke="#bbb"
            />
          </Ico>
        </button>
        <button type="button" aria-label="Непрерывный разворот" className="ml-[10px]">
          <Ico>
            <path
              d="M6.500 0v8.500H0M9.500 0v8.500H16M6.500 16v-4.500H0M9.500 16v-4.500H16M1 2.500h4M1 5.500h4M11 2.500h4M11 5.500h4M1 14.500h4M11 14.500h4"
              stroke="#bbb"
            />
          </Ico>
        </button>
        <span className="ml-[22px] w-[64px] text-[13px] text-[#444]">79.76%</span>
        <Caret />
        <button type="button" aria-label="Уменьшить масштаб" className="ml-[4px]">
          <Ico>
            <circle cx="8" cy="8" r="7" stroke="#444" fill="#fff" />
            <path d="M4 8.500h8" stroke="#444" />
          </Ico>
        </button>
        <div className="relative ml-[6px] flex h-4 w-[91px] items-center">
          <input
            type="range"
            aria-label="Масштаб просмотра"
            defaultValue={38}
            className="w-full appearance-none bg-transparent [&::-webkit-slider-runnable-track]:h-px [&::-webkit-slider-runnable-track]:bg-[#333] [&::-webkit-slider-thumb]:-mt-1 [&::-webkit-slider-thumb]:h-[9px] [&::-webkit-slider-thumb]:w-1 [&::-webkit-slider-thumb]:appearance-none [&::-webkit-slider-thumb]:bg-[#222]"
          />
          <span className="pointer-events-none absolute left-1/2 h-[7px] w-px bg-[#333]" />
        </div>
        <button type="button" aria-label="Увеличить масштаб" className="ml-1">
          <Ico>
            <circle cx="8" cy="8" r="7" stroke="#444" fill="#fff" />
            <path d="M4 8.500h8M8.500 4v8" stroke="#444" />
          </Ico>
        </button>
      </div>
    </footer>
  );
}

/* ---------- windows taskbar ---------- */

const Flower = ({ size }: { size: number }) => (
  <svg width={size} height={size} viewBox="0 0 24 24" aria-hidden="true">
    {[0, 45, 90, 135, 180, 270, 315].map((a) => (
      <ellipse key={a} cx="12" cy="5" rx="3" ry="5" fill="#2eb62c" transform={`rotate(${a + 10} 12 12)`} />
    ))}
    <ellipse cx="12" cy="5.500" rx="2.500" ry="4" fill="#e03a20" transform="rotate(245 12 12)" />
    <circle cx="12" cy="12" r="3" fill="#f7e52b" />
  </svg>
);

function Taskbar() {
  const system = [
    [
      "Пуск",
      <Ico>
        <path
          d="M0 2.300L6.500 1.300V7.500H0zM7.500 1.200L16 0v7.500H7.500zM0 8.500h6.500v6.200L0 13.800zM7.500 8.500H16V16l-8.500-1.200z"
          fill="#fff"
        />
      </Ico>,
    ],
    [
      "Поиск",
      <Ico w={17} h={17}>
        <circle cx="10.500" cy="6.500" r="5.500" stroke="#fff" strokeWidth="1.300" />
        <path d="M6.500 10.500L.5 16.500" stroke="#fff" strokeWidth="1.500" />
      </Ico>,
    ],
    [
      "Представление задач",
      <Ico w={17}>
        <path d="M.5 0v2.500h11V0M.5 16v-2.500h11V16M.5 4.500h11v7H.5zM15.500 0v16" stroke="#fff" strokeWidth="1.200" />
        <path d="M14 4h3v3h-3z" fill="#fff" />
      </Ico>,
    ],
  ] as [string, ReactNode][];

  const apps = [
    {
      name: "Проводник",
      open: true,
      icon: (
        <Ico w={22} h={20}>
          <path d="M0 1h8l2 2h12v16H0z" fill="#e8b83c" />
          <path d="M0 4h22v15H0z" fill="#fbe29b" />
          <path d="M4 19v-8h14v8h-4v-3H8v3z" fill="#3fa9e6" />
        </Ico>
      ),
    },
    { name: "ICQ", open: true, icon: <Flower size={22} /> },
    {
      name: "Chrome",
      open: true,
      icon: (
        <Ico w={22} h={22}>
          <circle cx="11" cy="11" r="11" fill="#fbc116" />
          <path d="M11 11L1.500 5.500A11 11 0 0 1 20.500 5.500z" fill="#db4437" />
          <path d="M1.500 5.500A11 11 0 0 0 11 22l4-9-4-2z" fill="#1da462" />
          <circle cx="11" cy="11" r="5.200" fill="#fff" />
          <circle cx="11" cy="11" r="4" fill="#4587f3" />
        </Ico>
      ),
    },
    {
      name: "The Bat!",
      open: false,
      icon: (
        <Ico w={24} h={24}>
          <path d="M1 1h22v22H1z" fill="#1c2f86" stroke="#fff" strokeDasharray="2 1" />
          <circle cx="12" cy="12" r="10.500" fill="#f5e93a" />
          <path
            d="M1 11c2-3 4-4 7-4-1 2 0 3 2 3l1-3 1 1 1-1 1 3c2 0 3-1 2-3 3 0 5 1 7 4-2 0-3 1-4 4-2-1-4 0-4 1-2 0-2 2-3 4-1-2-1-4-3-4 0-1-2-2-4-1-1-3-2-4-4-4z"
            fill="#111"
          />
        </Ico>
      ),
    },
    {
      name: "Internet Explorer",
      open: true,
      icon: (
        <Ico w={24} h={24}>
          <path d="M20 16a8 8 0 1 1 .500-4H7" stroke="#52bdf0" strokeWidth="4" />
          <path d="M4 22c-5-1 1-12 9-17C18 1 23 1 21 6" stroke="#f2b632" strokeWidth="2" />
        </Ico>
      ),
    },
    {
      name: "TeamViewer",
      open: true,
      icon: (
        <Ico w={24} h={24}>
          <path d="M0 0h24v24H0z" fill="#1573d0" />
          <circle cx="12" cy="12" r="10" fill="#fff" />
          <path d="M4 12l4-4v3h8V8l4 4-4 4v-3H8v3z" fill="#1573d0" />
        </Ico>
      ),
    },
    {
      name: "Edge",
      open: true,
      icon: (
        <Ico w={22} h={22}>
          <path
            d="M1 10C2 3 7 0 12 0c6 0 9 4 9 9v4H8c0 5 7 6 12 3v4c-6 3-17 3-17-7 0-3 2-6 6-7-4 0-6 1-8 4zM8 9h7c0-5-6-5-7 0z"
            fill="#1a7fe0"
          />
        </Ico>
      ),
    },
    {
      name: "Foxit Reader",
      open: true,
      active: true,
      icon: (
        <span className="relative flex h-6 w-6 items-end justify-center bg-[#f58220]">
          <span className="absolute inset-0">
            <Ico w={24} h={24}>
              <path d="M19 0v5h5z" fill="#565350" />
              <path d="M15 5C10 4 6 8 8 12c2 3 8 2 8-4h-4" stroke="#fff" strokeWidth="2.500" />
            </Ico>
          </span>
          <span className="relative text-[6px] leading-[7px] font-bold text-white">PDF</span>
        </span>
      ),
    },
  ];

  return (
    <div className="flex h-10 shrink-0 bg-linear-to-r from-[#24292c] via-[#181615] to-[#22272a] font-['Open_Sans',sans-serif] text-white">
      {system.map(([name, icon]) => (
        <button key={name} type="button" aria-label={name} className="flex w-12 items-center justify-center">
          {icon}
        </button>
      ))}
      <div className="ml-[3px] flex gap-px">
        {apps.map((app) => (
          <button
            key={app.name}
            type="button"
            aria-label={app.name}
            className={`relative flex w-12 items-center justify-center ${app.active ? "bg-[#565350]" : ""}`}
          >
            {app.icon}
            {app.open && (
              <span className={`absolute bottom-0 h-0.5 bg-[#76b9ed] ${app.active ? "inset-x-0" : "inset-x-1"}`} />
            )}
          </button>
        ))}
      </div>

      <div className="ml-auto flex items-center">
        <Ico w={17}>
          <circle cx="11.500" cy="4" r="3" stroke="#fff" />
          <circle cx="5.500" cy="7.500" r="2.500" stroke="#fff" />
          <path d="M1 15c0-6 9-6 9 0M8.500 9c2-3 7-2 7 3" stroke="#fff" />
        </Ico>
        <span className="ml-5">
          <Ico w={12} h={8}>
            <path d="M.5 7l5.500-5.500L11.500 7" stroke="#fff" strokeWidth="1.300" />
          </Ico>
        </span>
        <span className="ml-3">
          <Flower size={14} />
        </span>
        <span className="ml-2">
          <Ico w={15} h={10}>
            <path d="M.6.600h12.800v8.800H.6z" stroke="#fff" strokeWidth="1.200" />
            <path d="M2 2h5v6H2zM13.500 3h1.500v4h-1.500z" fill="#fff" />
          </Ico>
        </span>
        <span className="ml-2.5">
          <Ico w={14} h={14}>
            <path d="M1 12A11 11 0 0 1 12 1.500M4 12.500A8 8 0 0 1 12 4.500M7 13a5 5 0 0 1 5-5" stroke="#ccc" />
            <circle cx="11" cy="12" r="1.500" fill="#fff" />
          </Ico>
        </span>
        <span className="ml-2">
          <Ico w={17} h={14}>
            <path d="M.5 5h3l3.500-3.500v11L3.500 9h-3z" stroke="#fff" />
            <path d="M9.500 5c1 1 1 3 0 4M12 3c2 2 2 6 0 8M14 1c3 3 3 9 0 12" stroke="#bbb" />
          </Ico>
        </span>
        <span className="ml-2 text-[12px]">РУС</span>
        <time className="ml-3 w-[56px] text-center text-[11px] leading-[18px] whitespace-nowrap">
          11:08
          <br />
          24.03.2019
        </time>
        <button type="button" aria-label="Уведомления: 7" className="relative mr-3 ml-4 h-7 w-[26px]">
          <Ico w={17} h={18}>
            <path d="M1 1h16v12H8l-4 4v-4H1z" fill="#fff" />
            <path d="M4 4.500h10M4 7.500h10M4 10.500h6" stroke="#222" />
          </Ico>
          <span className="absolute right-0 bottom-0 flex h-[17px] w-[17px] items-center justify-center rounded-full border border-[#999] bg-[#34383b] text-[11px] font-bold">
            7
          </span>
        </button>
        <span className="h-full w-[5px] border-l border-[#777]" />
      </div>
    </div>
  );
}

export default function App() {
  return (
    <div className="flex h-screen flex-col overflow-hidden bg-[#f0f0f0] font-['DejaVu_Sans_Condensed','Noto_Sans',sans-serif] text-[12px]">
      <TitleBar />
      <TabBar />
      <Ribbon />
      <Viewer />
      <StatusBar />
      <Taskbar />
    </div>
  );
}
